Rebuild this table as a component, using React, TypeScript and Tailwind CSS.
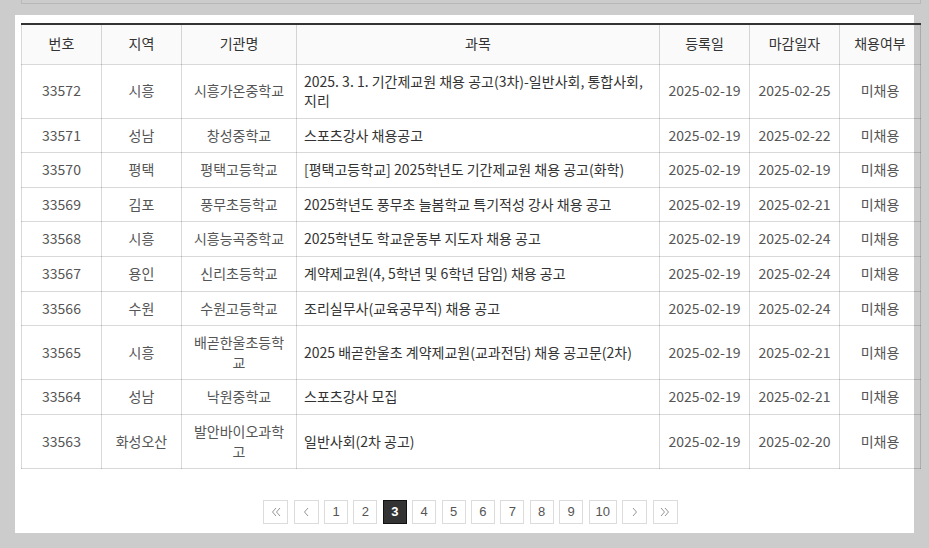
import React from "react";

type Row = {
  no: string;
  region: string;
  org: string;
  title: string;
  reg: string;
  due: string;
  status: string;
};

const rows: Row[] = [
  { no: "33572", region: "시흥", org: "시흥가온중학교", title: "2025. 3. 1. 기간제교원 채용 공고(3차)-일반사회, 통합사회, 지리", reg: "2025-02-19", due: "2025-02-25", status: "미채용" },
  { no: "33571", region: "성남", org: "창성중학교", title: "스포츠강사 채용공고", reg: "2025-02-19", due: "2025-02-22", status: "미채용" },
  { no: "33570", region: "평택", org: "평택고등학교", title: "[평택고등학교] 2025학년도 기간제교원 채용 공고(화학)", reg: "2025-02-19", due: "2025-02-19", status: "미채용" },
  { no: "33569", region: "김포", org: "풍무초등학교", title: "2025학년도 풍무초 늘봄학교 특기적성 강사 채용 공고", reg: "2025-02-19", due: "2025-02-21", status: "미채용" },
  { no: "33568", region: "시흥", org: "시흥능곡중학교", title: "2025학년도 학교운동부 지도자 채용 공고", reg: "2025-02-19", due: "2025-02-24", status: "미채용" },
  { no: "33567", region: "용인", org: "신리초등학교", title: "계약제교원(4, 5학년 및 6학년 담임) 채용 공고", reg: "2025-02-19", due: "2025-02-24", status: "미채용" },
  { no: "33566", region: "수원", org: "수원고등학교", title: "조리실무사(교육공무직) 채용 공고", reg: "2025-02-19", due: "2025-02-24", status: "미채용" },
  { no: "33565", region: "시흥", org: "배곧한울초등학교", title: "2025 배곧한울초 계약제교원(교과전담) 채용 공고문(2차)", reg: "2025-02-19", due: "2025-02-21", status: "미채용" },
  { no: "33564", region: "성남", org: "낙원중학교", title: "스포츠강사 모집", reg: "2025-02-19", due: "2025-02-21", status: "미채용" },
  { no: "33563", region: "화성오산", org: "발안바이오과학고", title: "일반사회(2차 공고)", reg: "2025-02-19", due: "2025-02-20", status: "미채용" },
];

const headers = ["번호", "지역", "기관명", "과목", "등록일", "마감일자", "채용여부"];
const widths = ["w-[80px]", "w-[80px]", "w-[115px]", "w-[363px]", "w-[90px]", "w-[90px]", "w-[81px]"];

const Chevron = ({ dir, double }: { dir: "left" | "right"; double?: boolean }) => {
  const single = dir === "left" ? "M5 1 L1.5 5 L5 9" : "M1 1 L4.5 5 L1 9";
  return (
    <svg width={double ? 10 : 6} height="10" viewBox={double ? "0 0 10 10" : "0 0 6 10"} fill="none" stroke="#888" strokeWidth="0.9">
      <path d={single} />
      {double && <path d={single} transform="translate(4 0)" />}
    </svg>
  );
};

const PageBox = ({ children, active, wide }: { children: React.ReactNode; active?: boolean; wide?: boolean }) => (
  <span
    className={
      "flex h-[24px] items-center justify-center border text-[13px] " +
      (wide ? "w-[25px] " : "min-w-[24px] px-[6px] ") +
      (active ? "border-[#111] bg-[#333] font-bold text-white" : "border-[#dcdcdc] bg-white text-[#555]")
    }
  >
    {children}
  </span>
);

export default function App() {
  return (
    <div className="min-h-screen bg-[#cccccc] font-['Noto_Sans_CJK_KR',sans-serif]">
      <div className="ml-[21px] h-[4px] w-[900px] border-x border-b border-[#b8b8b8]" />
      <div className="ml-[15px] mt-[11px] h-[518px] w-[899px] bg-white pt-[8px]">
        <div className="ml-[6px] w-[899px]">
          <table className="w-[899px] table-fixed border-collapse border-t-2 border-t-[#333] text-[14px] leading-[1.4] [font-feature-settings:'palt']">
            <colgroup>
              {widths.map((w, i) => (
                <col key={i} className={w} />
              ))}
            </colgroup>
            <thead>
              <tr className="bg-black/[0.02]">
                {headers.map((h) => (
                  <th key={h} className="h-[40px] border border-t-0 border-black/15 px-[6px] text-center font-normal text-[#333]">
                    {h}
                  </th>
                ))}
              </tr>
            </thead>
            <tbody>
              {rows.map((r) => (
                <tr key={r.no}>
                  <td className="border border-black/15 px-[6px] py-[7px] text-center text-[#555]">{r.no}</td>
                  <td className="border border-black/15 px-[6px] py-[7px] text-center text-[#555]">{r.region}</td>
                  <td className="border border-black/15 px-[6px] py-[7px] text-center text-[#555]">{r.org}</td>
                  <td className="border border-black/15 px-[7px] py-[7px] text-left text-[#333]">{r.title}</td>
                  <td className="border border-black/15 px-[6px] py-[7px] text-center text-[#555]">{r.reg}</td>
                  <td className="border border-black/15 px-[6px] py-[7px] text-center text-[#555]">{r.due}</td>
                  <td className="border border-black/15 px-[6px] py-[7px] text-center text-[#555]">{r.status}</td>
                </tr>
              ))}
            </tbody>
          </table>

          <div className="mt-[31px] flex justify-center gap-[5.4px] font-['Liberation_Sans',sans-serif]">
            <PageBox wide><Chevron dir="left" double /></PageBox>
            <PageBox wide><Chevron dir="left" /></PageBox>
            {[1, 2, 3, 4, 5, 6, 7, 8, 9, 10].map((n) => (
              <PageBox key={n} active={n === 3}>{n}</PageBox>
            ))}
            <PageBox wide><Chevron dir="right" /></PageBox>
            <PageBox wide><Chevron dir="right" double /></PageBox>
          </div>
        </div>
      </div>
    </div>
  );
}
